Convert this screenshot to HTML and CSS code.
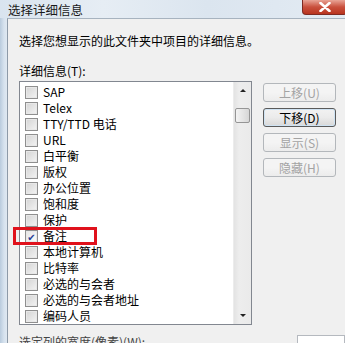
FILE: index.html
```html
<!DOCTYPE html>
<html lang="zh-CN">
<head>
  <meta charset="UTF-8">
  <title>选择详细信息</title>
  <link rel="stylesheet" href="styles.css">
</head>
<body>

  <div class="window">
    <div class="titlebar">
      <span class="title">选择详细信息</span>
      <div class="close">
        <svg width="12" height="10" viewBox="0 0 12 10">
          <path d="M1.5 1 L10.5 9 M10.5 1 L1.5 9" stroke="#fff" stroke-width="2.6" stroke-linecap="round"/>
        </svg>
      </div>
    </div>

    <div class="frame">
      <div class="client">
        <p class="intro">选择您想显示的此文件夹中项目的详细信息。</p>
        <div class="list-label">详细信息(T):</div>

        <div class="main">
          <div class="listbox">
            <ul class="items" id="items">
              <!-- lignes générées plus bas -->
            </ul>
            <div class="scrollbar">
              <div class="arrow up"></div>
              <div class="thumb"></div>
              <div class="track"></div>
              <div class="arrow down"></div>
            </div>
          </div>

          <div class="buttons">
            <button class="btn" disabled>上移(U)</button>
            <button class="btn active">下移(D)</button>
            <button class="btn" disabled>显示(S)</button>
            <button class="btn" disabled>隐藏(H)</button>
          </div>
        </div>

        <div class="width-row">
          <span class="width-label">选定列的宽度(像素)(W):</span>
          <span class="width-input"></span>
        </div>
      </div>
    </div>
  </div>

  <div class="highlight"></div>

  <script>
    const columns = [
      { name: "SAP" },
      { name: "Telex" },
      { name: "TTY/TTD 电话" },
      { name: "URL" },
      { name: "白平衡" },
      { name: "版权" },
      { name: "办公位置" },
      { name: "饱和度" },
      { name: "保护" },
      { name: "备注", checked: true },
      { name: "本地计算机" },
      { name: "比特率" },
      { name: "必选的与会者" },
      { name: "必选的与会者地址" },
      { name: "编码人员" }
    ];

    const list = document.getElementById("items");

    columns.forEach(col => {
      const li = document.createElement("li");
      li.className = "item";
      const box = document.createElement("span");
      box.className = col.checked ? "check checked" : "check";
      if (col.checked) box.textContent = "✔";
      const label = document.createElement("span");
      label.className = "name";
      label.textContent = col.name;
      li.appendChild(box);
      li.appendChild(label);
      list.appendChild(li);
    });
  </script>
</body>
</html>
```

FILE: styles.css
```css
body {
  margin: 0;
  width: 345px;
  height: 343px;
  overflow: hidden;
  font-family: "Noto Sans CJK SC", "DejaVu Sans", sans-serif;
  font-size: 12px;
  color: #000;
  background-color: #f0f0f0;
  position: relative;
}

.window {
  display: flex;
  flex-direction: column;
  height: 100%;
  background: linear-gradient(90deg, #b9cbdd 0px, #d6e2ee 4px, #dfe8f1 7px);
}

.titlebar {
  height: 21px;
  display: flex;
  justify-content: space-between;
  align-items: flex-start;
  background: linear-gradient(90deg, #d9e4ef, #e6edf4 30%, #dbe5ef 60%, #e3ebf3);
}

.title {
  margin-left: 8px;
  margin-top: 2px;
  font-size: 12.5px;
  line-height: 16px;
  color: #1a1a1a;
}

.close {
  width: 43px;
  height: 14px;
  margin-right: -2px;
  border: 1px solid #7d2a22;
  border-top: none;
  border-radius: 0 0 4px 4px;
  background: linear-gradient(#e9a496, #c9503d 50%, #b8341f);
  display: flex;
  justify-content: center;
  align-items: center;
}

.frame {
  flex: 1;
  padding-left: 7px;
  display: flex;
}

.client {
  flex: 1;
  border-left: 1px solid #8d9aa8;
  border-top: 1px solid #a7b3bf;
  background-color: #f0f0f0;
  padding: 14px 0 0 11px;
}

.intro {
  margin: 0;
  line-height: 16px;
}

.list-label {
  margin-top: 14px;
  line-height: 16px;
}

.main {
  display: flex;
  align-items: flex-start;
  margin-top: 2px;
}

.listbox {
  width: 231px;
  height: 242px;
  border: 1px solid #828790;
  background-color: #fff;
  display: flex;
}

.items {
  flex: 1;
  list-style: none;
  margin: 0;
  padding: 2px 0 0 5px;
  overflow: hidden;
}

.item {
  height: 16px;
  display: flex;
  align-items: center;
  gap: 5px;
  white-space: nowrap;
}

.check {
  width: 11px;
  height: 11px;
  border: 1px solid #8f8f8f;
  background: linear-gradient(135deg, #d4d4d4, #f4f4f4);
  box-shadow: inset 0 0 0 1px #e8e8e8;
  font-size: 10px;
  line-height: 11px;
  text-align: center;
  color: #2a3f96;
  flex-shrink: 0;
}

.check.checked {
  background: linear-gradient(135deg, #e6e6e6, #fbfbfb);
}

.name {
  line-height: 12px;
}

.scrollbar {
  width: 17px;
  display: flex;
  flex-direction: column;
  align-items: center;
  background: linear-gradient(90deg, #e3e3e3, #ededed 30%, #eaeaea);
  border-left: 1px solid #ececec;
}

.arrow {
  height: 17px;
  width: 100%;
  display: flex;
  justify-content: center;
  align-items: center;
}

.arrow::after {
  content: "";
  border-left: 3px solid transparent;
  border-right: 3px solid transparent;
}

.arrow.up::after {
  border-bottom: 3px solid #222;
}

.arrow.down::after {
  border-top: 3px solid #222;
}

.thumb {
  width: 13px;
  height: 13px;
  margin-top: 9px;
  border: 1px solid #959595;
  border-radius: 2px;
  background: linear-gradient(90deg, #f3f3f3, #e2e2e2 60%, #d6d6d6);
}

.track {
  flex: 1;
}

.buttons {
  display: flex;
  flex-direction: column;
  gap: 6px;
  margin-left: 11px;
  margin-top: 2px;
}

.btn {
  width: 73px;
  height: 19px;
  padding: 0;
  font-family: inherit;
  font-size: 12px;
  line-height: 15px;
  border: 1px solid #b3b7bb;
  border-radius: 3px;
  background: linear-gradient(#f4f4f4, #f4f4f4 50%, #ececec);
  color: #a3a3a3;
}

.btn.active {
  color: #000;
  border-color: #5a5a5a;
  background: linear-gradient(#f2f2f2, #ebebeb 50%, #d8d8d8);
  box-shadow: inset 0 0 0 1px #cfe3f3;
}

.width-row {
  display: flex;
  align-items: flex-start;
  justify-content: space-between;
  margin-top: 9px;
}

.width-label {
  line-height: 16px;
  color: #444;
}

.width-input {
  width: 46px;
  height: 20px;
  margin-top: 1px;
  border: 1px solid #b5b9bf;
  background-color: #fff;
}

.highlight {
  position: absolute;
  left: 13px;
  top: 227px;
  width: 78px;
  height: 12px;
  border: 3px solid #e0121c;
}
```
